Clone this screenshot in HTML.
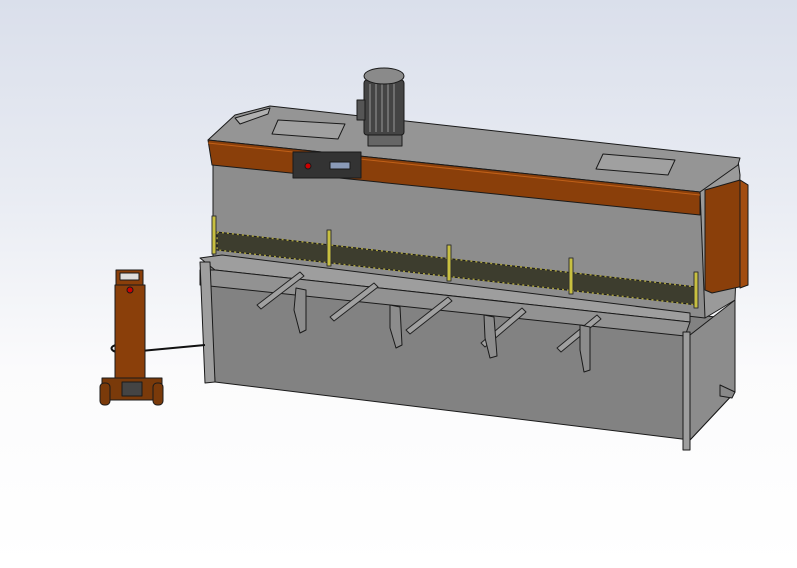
<!DOCTYPE html><html><head><style>html,body{margin:0;padding:0;width:797px;height:568px;overflow:hidden}body{background:linear-gradient(180deg,#dadfeb 0%,#e9ecf3 35%,#fbfbfc 65%,#fff 100%)}svg{display:block}</style></head><body>
<svg width="797" height="568" viewBox="0 0 797 568" xmlns="http://www.w3.org/2000/svg" stroke="#1a1a1a" stroke-width="1" stroke-linejoin="round">
<polygon points="205,262 725,318 735,300 735,392 690,440 215,382" fill="#828282"/>
<polygon points="690,335 735,300 735,392 690,440" fill="#8c8c8c"/>
<polygon points="213,160 705,212 705,318 213,262" fill="#8d8d8d"/>
<polygon points="700,190 738,160 740,175 735,300 705,318" fill="#9a9a9a"/>
<polygon points="208,140 235,115 270,106 740,158 738,165 700,192" fill="#959595"/>
<polygon points="235,118 270,108 268,114 240,124" fill="#b0b0b0"/>
<polygon points="278,120 345,124 338,139 272,134" fill="#a0a0a0"/>
<polygon points="603,154 675,160 668,175 596,169" fill="#a0a0a0"/>
<polygon points="208,140 700,192 700,215 212,165" fill="#8a3f0a"/>
<polyline points="208,143 700,195" fill="none" stroke="#c06018" stroke-width="1"/>
<rect x="293" y="152" width="68" height="26" fill="#333"/>
<circle cx="308" cy="166" r="3" fill="#c00"/>
<rect x="330" y="162" width="20" height="7" fill="#8a9ab8"/>
<rect x="368" y="128" width="34" height="18" fill="#666"/>
<rect x="364" y="80" width="40" height="55" rx="3" fill="#444"/>
<g stroke="#999" stroke-width="1"><line x1="370" y1="84" x2="370" y2="132"/><line x1="376" y1="84" x2="376" y2="132"/><line x1="382" y1="84" x2="382" y2="132"/><line x1="388" y1="84" x2="388" y2="132"/><line x1="394" y1="84" x2="394" y2="132"/></g>
<ellipse cx="384" cy="76" rx="20" ry="8" fill="#8a8a8a"/>
<rect x="357" y="100" width="8" height="20" fill="#555"/>
<polygon points="217,232 697,287 697,305 217,250" fill="#3d3d2e"/>
<polygon points="217,232 697,287 697,305 217,250" fill="none" stroke="#a8a040" stroke-dasharray="2,3" stroke-width="1.5"/>
<g fill="#c8c040" stroke="#333"><rect x="212" y="216" width="4" height="38"/><rect x="327" y="230" width="4" height="36"/><rect x="447" y="245" width="4" height="36"/><rect x="569" y="258" width="4" height="36"/><rect x="694" y="272" width="4" height="36"/></g>
<polygon points="200,258 222,255 690,313 690,322 215,270" fill="#9e9e9e"/>
<polygon points="200,270 215,270 690,322 685,336 200,285" fill="#929292"/>
<g stroke="#222" stroke-width="1" fill="#a0a0a0">
<polygon points="257,305 300,272 304,276 261,309"/>
<polygon points="330,317 374,283 378,287 334,321"/>
<polygon points="406,330 448,297 452,301 410,334"/>
<polygon points="481,343 522,308 526,312 485,347"/>
<polygon points="557,348 597,315 601,319 561,352"/>
</g>
<g fill="#8c8c8c"><polygon points="296,288 306,290 306,330 300,333 294,310"/><polygon points="390,305 400,307 402,345 396,348 390,328"/><polygon points="484,315 494,317 497,356 490,358 485,338"/><polygon points="580,325 590,327 590,370 584,372 580,350"/></g>
<polygon points="200,262 210,262 215,382 205,383" fill="#9e9e9e"/>
<polygon points="683,332 690,332 690,450 683,450" fill="#9e9e9e"/>
<polygon points="720,385 735,392 732,398 720,396" fill="#888"/>
<polygon points="705,190 740,180 748,185 748,285 712,293 705,290" fill="#8a3f0a"/>
<polygon points="740,180 748,185 748,285 740,288" fill="#a24d10"/>
<path d="M118,345 C108,345 108,355 130,352 L205,345" fill="none" stroke="#111" stroke-width="2"/>
<rect x="116" y="270" width="27" height="15" fill="#8a3f0a"/>
<rect x="120" y="273" width="19" height="7" fill="#ddd"/>
<rect x="115" y="285" width="30" height="97" fill="#8a3f0a"/>
<circle cx="130" cy="290" r="3" fill="#c00"/>
<rect x="102" y="378" width="60" height="22" fill="#7a3a0a"/>
<rect x="122" y="382" width="20" height="14" fill="#444"/>
<rect x="100" y="383" width="10" height="22" rx="4" fill="#7a3a0a"/>
<rect x="153" y="383" width="10" height="22" rx="4" fill="#7a3a0a"/>
</svg>
</body></html>
